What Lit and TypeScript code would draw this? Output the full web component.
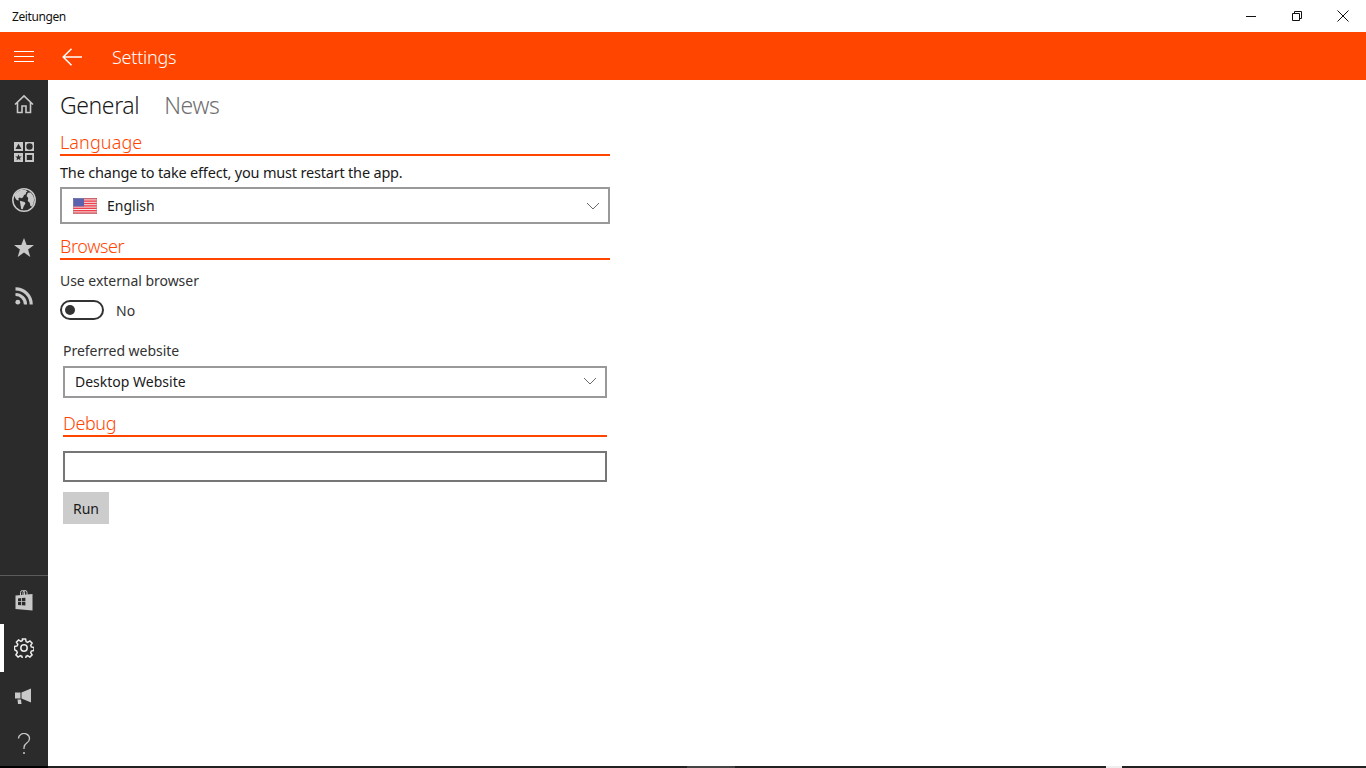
import { LitElement, html, css, svg } from "lit";
import { customElement } from "lit/decorators.js";

const chevron = html`<svg class="chev" width="14" height="8" viewBox="0 0 14 8"><path d="M1 1l6 6 6-6" fill="none" stroke="#6a6a6a" stroke-width="1"/></svg>`;

const flagStripes = [0, 1, 2, 3, 4, 5, 6].map(
  (i) => svg`<rect x="0" y="${i * 2.4}" width="24" height="1.4" fill="#ee3f4c"/>`
);

@customElement("app-root")
export class AppRoot extends LitElement {
  static styles = css`
    :host {
      display: flex;
      flex-direction: column;
      position: relative;
      width: 1366px;
      height: 768px;
      overflow: hidden;
      background: #fff;
      font-family: "Noto Sans", "Open Sans", sans-serif;
      color: #1a1a1a;
    }
    .titlebar {
      height: 32px;
      display: flex;
      align-items: center;
      flex: none;
    }
    .app-name {
      font-size: 12px;
      padding-left: 12px;
      flex: 1;
      letter-spacing: -0.4px;
      color: #111;
    }
    .win {
      width: 46px;
      height: 32px;
      display: flex;
      align-items: center;
      justify-content: center;
    }
    .win svg { display: block; }
    .appbar {
      box-sizing: border-box;
      height: 48px;
      padding-top: 2px;
      flex: none;
      background: #ff4500;
      display: flex;
      align-items: center;
      color: #fff;
    }
    .burger { width: 48px; display: flex; justify-content: center; }
    .back { width: 48px; display: flex; justify-content: center; }
    .appbar-title { font-size: 18px; padding-left: 16px; letter-spacing: -0.25px; font-weight: 300; }
    .main { flex: 1; display: flex; min-height: 0; }
    .side {
      width: 48px;
      flex: none;
      background: #2b2b2b;
      display: flex;
      flex-direction: column;
    }
    .side-top { flex: 1; }
    .side-bottom { border-top: 1px solid #5c5c5c; }
    .nav {
      height: 48px;
      display: flex;
      align-items: center;
      justify-content: center;
      box-sizing: border-box;
    }
    .nav svg { display: block; }
    .nav.active { box-shadow: inset 4px 0 0 #fff; }
    .content { flex: 1; padding-left: 12px; }
    .tabs {
      display: flex;
      gap: 25px;
      height: 50px;
      padding-bottom: 2px;
      align-items: center;
      font-size: 23px;
      letter-spacing: -0.4px;
      font-weight: 300;
    }
    .tab-off { color: #707070; }
    .sec {
      width: 550px;
      border-bottom: 2px solid #ff4500;
      color: #ff4500;
      font-size: 18px;
      height: 22px;
      line-height: 20px;
      letter-spacing: -0.4px;
      font-weight: 300;
      box-sizing: content-box;
    }
    .sec.wide { letter-spacing: 0.1px; }
    .note {
      font-size: 14.5px;
      height: 31px;
      line-height: 33px;
      color: #1a1a1a;
      letter-spacing: -0.19px;
    }
    .combo {
      box-sizing: border-box;
      display: flex;
      align-items: center;
      border: 2px solid #999;
      font-size: 14px;
      color: #1a1a1a;
    }
    .combo.lang { width: 550px; height: 37px; padding: 0 8px 0 11px; margin-bottom: 12px; }
    .combo .label { flex: 1; }
    .flag { margin-right: 10px; display: block; }
    .chev { display: block; }
    .field-label {
      font-size: 14px;
      letter-spacing: -0.04px;
      color: #333;
    }
    .l1 { height: 20px; line-height: 20px; margin-top: 11px; }
    .toggle-row {
      display: flex;
      align-items: center;
      height: 20px;
      margin-top: 9px;
      font-size: 14px;
      gap: 12px;
      color: #333;
    }
    .toggle {
      box-sizing: border-box;
      width: 44px;
      height: 20px;
      border: 2px solid #333;
      border-radius: 10px;
      display: flex;
      align-items: center;
      padding-left: 3px;
    }
    .knob { width: 10px; height: 10px; background: #333; border-radius: 50%; }
    .lower { margin-left: 3px; width: 544px; padding-top: 21px; }
    .l2 { height: 20px; line-height: 20px; }
    .combo.site { height: 32px; width: 544px; margin-top: 5px; padding: 0 8px 2px 10px; margin-bottom: 15px; }
    .lower .sec { width: 544px; }
    .input {
      box-sizing: border-box;
      width: 544px;
      height: 31px;
      border: 2px solid #767676;
      margin-top: 14px;
    }
    .run {
      width: 46px;
      height: 32px;
      margin-top: 10px;
      background: #ccc;
      display: flex;
      align-items: center;
      justify-content: center;
      font-size: 14px;
      color: #1a1a1a;
    }
    .edge { position: absolute; left: 0; right: 0; bottom: 0; height: 2px; display: flex; background: #222; }
    .edge .s { width: 48px; background: #000; }
    .edge .a { width: 639px; }
    .edge .b { width: 48px; background: #444; }
    .edge .c { width: 371px; }
    .edge .d { width: 16px; background: #eee; }
  `;

  render() {
    const g = "#c8c8c8";
    return html`
      <div class="titlebar">
        <div class="app-name">Zeitungen</div>
        <div class="win"><svg width="10" height="10" viewBox="0 0 10 10"><path d="M0 5.5h10" stroke="#111"/></svg></div>
        <div class="win"><svg width="10" height="10" viewBox="0 0 10 10"><path d="M.5 2.5h7v7h-7zM2.5 2.5v-2h7v7h-2" fill="none" stroke="#111"/></svg></div>
        <div class="win"><svg width="12" height="12" viewBox="0 0 12 12"><path d="M.5.5l11 11M11.500.5l-11 11" stroke="#111"/></svg></div>
      </div>
      <div class="appbar">
        <div class="burger"><svg width="20" height="12" viewBox="0 0 20 12"><path d="M0 .5h20M0 5.5h20M0 10.500h20" stroke="#fff"/></svg></div>
        <div class="back"><svg width="20" height="18" viewBox="0 0 20 18"><path d="M9.500.7L1.200 9l8.300 8.300M1.200 9H20" fill="none" stroke="#fff" stroke-width="1.500"/></svg></div>
        <div class="appbar-title">Settings</div>
      </div>
      <div class="main">
        <nav class="side">
          <div class="side-top">
            <div class="nav"><svg width="20" height="20" viewBox="0 0 20 20"><path d="M1 10.500L10 1.800l9 8.700M3.500 8.500V18.500h4.500v-6.500h4v6.500h4.500V8.500" fill="none" stroke="${g}" stroke-width="1.600"/></svg></div>
            <div class="nav"><svg width="22" height="22" viewBox="0 0 22 22"><path fill-rule="evenodd" fill="${g}" d="M1 1h9v9H1zM12 1h9v9h-9zM1 12h9v9H1zM12 12h9v9h-9z"/><path fill="#2b2b2b" d="M5.500 2.800l3 5.200h-6zM16.500 2.300a3.200 3.200 0 1 1 0 6.400 3.200 3.200 0 0 1 0-6.400zM5.500 13.200l.9 2.200 2.300.1-1.800 1.500.6 2.300-2-1.300-2 1.300.6-2.300-1.800-1.500 2.300-.1zM13.800 14h5.400v5h-5.400z"/></svg></div>
            <div class="nav"><svg width="24" height="24" viewBox="0 0 24 24"><circle cx="12" cy="12" r="11.200" fill="none" stroke="${g}" stroke-width="1.500"/><path fill="${g}" d="M9 1.800l4.500.2 2 1.500-1.500 1-.2 1.800-1.800.6-.8 2-1.500 1.300-2.200-.6-1.200 1 .6 2 -2.300-.6-1.500-2.200-1.300-2.800L5 4z"/><path fill="${g}" d="M7.800 12.800l4.800 1.200.8 1.600-1.700 2.700-1 3-1.500-.4-.6-3.500z"/><path fill="${g}" d="M15.800 4.800l3-.2 2.700 3.700.6 3-.6 5-1.600 2.200-1.500-.6-.7-3.200-1.900-1.600.4-3.200-1.600-2z"/></svg></div>
            <div class="nav"><svg width="20" height="20" viewBox="0 0 20 20"><path fill="${g}" d="M10 0l2.700 7h7.300l-5.900 4.500 2.200 7.500L10 14.600 3.700 19l2.200-7.500L0 7h7.300z"/></svg></div>
            <div class="nav"><svg width="18" height="18" viewBox="0 0 18 18"><circle cx="2.800" cy="15.200" r="2.400" fill="${g}"/><path d="M.5 7.500a10 10 0 0 1 10 10M.5 1.800a15.700 15.700 0 0 1 15.700 15.700" fill="none" stroke="${g}" stroke-width="3.200"/></svg></div>
          </div>
          <div class="side-bottom">
            <div class="nav"><svg width="18" height="21" viewBox="0 0 18 21"><path fill="${g}" d="M.5 5.500L17.500 4v16.500L.5 19z"/><path fill="none" stroke="${g}" d="M5.500 5V2.500a2 2 0 0 1 4 0V5M8 5V2.500a2 2 0 0 1 4 0V5"/><path fill="#2b2b2b" d="M3 8.400l3.200-.3v3.200H3zM7 8l3.400-.3v3.600H7zM3 12h3.200v3.200L3 14.900zM7 12h3.400v3.600L7 15.300z"/></svg></div>
            <div class="nav active"><svg width="20" height="20" viewBox="0 0 20 20"><g fill="none" stroke="#ececec" stroke-width="1.500"><circle cx="10" cy="10" r="3.200"/><path d="M8.400 1h3.200l.5 2.600 1.500.7 2.300-1.400 2.200 2.200-1.400 2.300.6 1.500 2.700.5v3.200l-2.700.5-.6 1.500 1.400 2.300-2.200 2.200-2.300-1.400-1.500.6-.5 2.700H8.400l-.5-2.700-1.500-.6-2.300 1.400-2.200-2.200 1.400-2.300-.6-1.500L.5 11.600V8.400l2.700-.5.6-1.500-1.400-2.300 2.200-2.200 2.300 1.400 1.500-.7z"/></g></svg></div>
            <div class="nav"><svg width="18" height="17" viewBox="0 0 18 17"><path fill="${g}" d="M0 4.500h5.500v6H0zM6.500 4.500L16 .5v14l-9.500-4zM2.500 11.500h3.500l.5 4.500H3z"/></svg></div>
            <div class="nav"><svg width="14" height="22" viewBox="0 0 14 22"><path d="M1.500 5.500a5.500 5 0 1 1 8.500 4.200c-2 1.400-3 2.600-3 4.800v1.500" fill="none" stroke="${g}" stroke-width="1.300"/><circle cx="7" cy="20" r="1" fill="${g}"/></svg></div>
          </div>
        </nav>
        <main class="content">
          <div class="tabs"><span>General</span><span class="tab-off">News</span></div>
          <div class="sec wide">Language</div>
          <div class="note">The change to take effect, you must restart the app.</div>
          <div class="combo lang">
            <svg class="flag" width="24" height="16" viewBox="0 0 24 16">
              <rect width="24" height="16" rx="1" fill="#f2e6e6"/>
              ${flagStripes}
              <rect width="11" height="8.400" fill="#5a62b0"/>
              <rect x=".5" y=".5" width="23" height="15" rx="1" fill="none" stroke="#999" stroke-opacity=".45"/>
            </svg>
            <span class="label">English</span>${chevron}
          </div>
          <div class="sec">Browser</div>
          <div class="field-label l1">Use external browser</div>
          <div class="toggle-row"><div class="toggle"><div class="knob"></div></div><span>No</span></div>
          <div class="lower">
            <div class="field-label l2">Preferred website</div>
            <div class="combo site"><span class="label">Desktop Website</span>${chevron}</div>
            <div class="sec">Debug</div>
            <div class="input"></div>
            <div class="run">Run</div>
          </div>
        </main>
      </div>
      <div class="edge"><div class="s"></div><div class="a"></div><div class="b"></div><div class="c"></div><div class="d"></div></div>
    `;
  }
}
